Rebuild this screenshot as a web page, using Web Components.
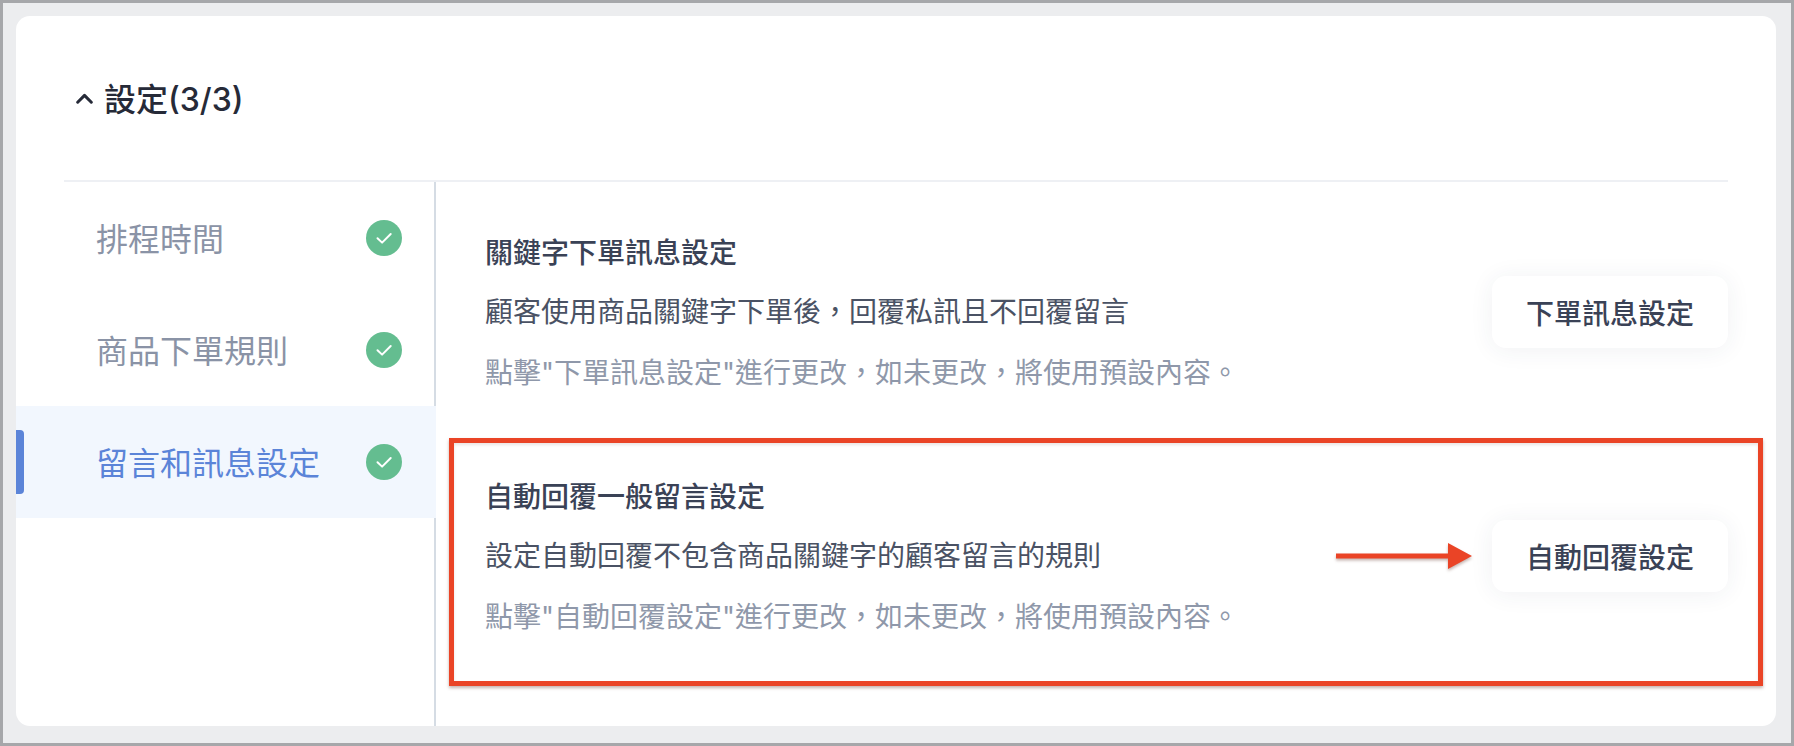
<!DOCTYPE html>
<html lang="zh-Hant">
<head>
<meta charset="utf-8">
<title>設定</title>
<style>
  html, body { margin: 0; height: 100%; }
  body { font-family: Inter, "Noto Sans CJK TC", sans-serif; }
</style>
</head>
<body>

<settings-frame>
  <settings-head slot="head" label="設定(3/3)"></settings-head>
  <side-item slot="side" label="排程時間"></side-item>
  <side-item slot="side" label="商品下單規則"></side-item>
  <side-item slot="side" label="留言和訊息設定" active></side-item>

  <setting-row slot="main" heading="關鍵字下單訊息設定" body="顧客使用商品關鍵字下單後&#xFF0C;回覆私訊且不回覆留言"
    hint="點擊&quot;下單訊息設定&quot;進行更改&#xFF0C;如未更改&#xFF0C;將使用預設內容。" action="下單訊息設定"></setting-row>
  <setting-row slot="main" heading="自動回覆一般留言設定" body="設定自動回覆不包含商品關鍵字的顧客留言的規則"
    hint="點擊&quot;自動回覆設定&quot;進行更改&#xFF0C;如未更改&#xFF0C;將使用預設內容。" action="自動回覆設定" marked></setting-row>
</settings-frame>

<script>
class SettingsFrame extends HTMLElement {
    constructor() {
        super();
        this.attachShadow({mode: 'open'}).innerHTML = `
            <style>
                :host {
                    display: block;
                    box-sizing: border-box;
                    width: 100%;
                    height: 746px;
                    padding: 13px 15px 17px 13px;
                    border: 3px solid #a6a7aa;
                    background: #ecedef;
                }
                .card {
                    display: flex;
                    flex-direction: column;
                    height: 100%;
                    border-radius: 14px;
                    background: #fff;
                    overflow: hidden;
                }
                .body { display: flex; flex: 1; min-height: 0; }
                .side {
                    box-sizing: border-box;
                    flex: none;
                    width: 420px;
                    border-right: 2px solid #d5dce4;
                }
                .main {
                    flex: 1;
                    padding: 8px 48px 0 49px;
                    min-width: 0;
                }
            </style>
            <div class="card">
                <slot name="head"></slot>
                <div class="body">
                    <div class="side"><slot name="side"></slot></div>
                    <div class="main"><slot name="main"></slot></div>
                </div>
            </div>
        `;
    }
}

class SettingsHead extends HTMLElement {
    connectedCallback() {
        this.attachShadow({mode: 'open'}).innerHTML = `
            <style>
                :host {
                    display: flex;
                    align-items: center;
                    box-sizing: border-box;
                    height: 166px;
                    margin: 0 48px;
                    padding: 0 0 2px 12px;
                    border-bottom: 2px solid #eef0f4;
                    color: #262a38;
                    font-size: 32px;
                    font-weight: 500;
                }
                svg { flex: none; margin-right: 11px; margin-top: 3px; }
            </style>
            <svg width="17" height="11" viewBox="0 0 17 11" fill="none" stroke="#262a38" stroke-width="3" stroke-linecap="round" stroke-linejoin="round"><path d="M1.7 9.2 8.5 2.4l6.8 6.8"/></svg>
            <span>${this.getAttribute('label')}</span>
        `;
    }
}

class SideItem extends HTMLElement {
    connectedCallback() {
        this.attachShadow({mode: 'open'}).innerHTML = `
            <style>
                :host {
                    display: flex;
                    align-items: center;
                    position: relative;
                    box-sizing: border-box;
                    height: 112px;
                    padding: 0 32px 0 80px;
                    color: #8a93a6;
                    font-size: 32px;
                }
                :host([active]) {
                    margin-right: -2px;
                    background: #f2f7fe;
                    color: #5b84d8;
                }
                :host([active])::before {
                    content: "";
                    position: absolute;
                    left: 0;
                    top: 24px;
                    width: 8px;
                    height: 64px;
                    border-radius: 0 4px 4px 0;
                    background: #5b84d8;
                }
                span { flex: 1; margin-top: -2px; }
                svg { flex: none; }
                :host([active]) svg { margin-right: 2px; }
            </style>
            <span>${this.getAttribute('label')}</span>
            <svg width="36" height="36" viewBox="0 0 36 36" fill="none"><circle cx="18" cy="18" r="18" fill="#64bd90"/><path d="M11.5 18.2l4.6 4.4 8.6-8.6" stroke="#fff" stroke-width="2" stroke-linecap="round" stroke-linejoin="round"/></svg>
        `;
    }
}

class ActionButton extends HTMLElement {
    constructor() {
        super();
        this.attachShadow({mode: 'open'}).innerHTML = `
            <style>
                :host {
                    display: flex;
                    align-items: center;
                    justify-content: center;
                    flex: none;
                    box-sizing: border-box;
                    width: 236px;
                    height: 72px;
                    border-radius: 14px;
                    background: #fff;
                    box-shadow: 0 2px 24px rgba(40, 50, 80, .07);
                    color: #3a4256;
                    font-size: 28px;
                    font-weight: 500;
                    cursor: pointer;
                }
            </style>
            <slot></slot>
        `;
    }
}

class SettingRow extends HTMLElement {
    connectedCallback() {
        const marked = this.hasAttribute('marked');
        this.attachShadow({mode: 'open'}).innerHTML = `
            <style>
                :host {
                    display: flex;
                    align-items: center;
                    position: relative;
                    height: 244px;
                }
                .text { flex: 1; min-width: 0; font-size: 28px; }
                .text div { height: 61px; line-height: 61px; white-space: nowrap; }
                .text .heading { color: #3a4256; font-weight: 500; line-height: 65px; }
                .body { color: #4a5264; }
                .hint { color: #8f98aa; }
                /* 빨간 표시는 내용 위에 겹쳐 그림 */
                .mark {
                    position: absolute;
                    left: -36px;
                    right: -35px;
                    top: 4px;
                    height: 248px;
                    box-sizing: border-box;
                    border: 5px solid #ea4426;
                    box-shadow: 0 2px 3px rgba(90, 40, 30, .35), inset 0 2px 3px rgba(90, 40, 30, .12);
                    pointer-events: none;
                }
                .arrow {
                    position: absolute;
                    right: 256px;
                    top: 109px;
                    filter: drop-shadow(0 2px 1.5px rgba(90, 40, 30, .35));
                }
            </style>
            <div class="text">
                <div class="heading">${this.getAttribute('heading')}</div>
                <div class="body">${this.getAttribute('body')}</div>
                <div class="hint">${this.getAttribute('hint').replace(/"/g, '&quot;')}</div>
            </div>
            <action-button>${this.getAttribute('action')}</action-button>
            ${marked ? `
            <div class="mark"></div>
            <svg class="arrow" width="136" height="26" viewBox="0 0 136 26"><path d="M0 10.4h112V0l24 13-24 13V15.6H0z" fill="#ea4426"/></svg>
            ` : ''}
        `;
    }
}

customElements.define('settings-frame', SettingsFrame);
customElements.define('settings-head', SettingsHead);
customElements.define('side-item', SideItem);
customElements.define('action-button', ActionButton);
customElements.define('setting-row', SettingRow);
</script>
</body>
</html>
